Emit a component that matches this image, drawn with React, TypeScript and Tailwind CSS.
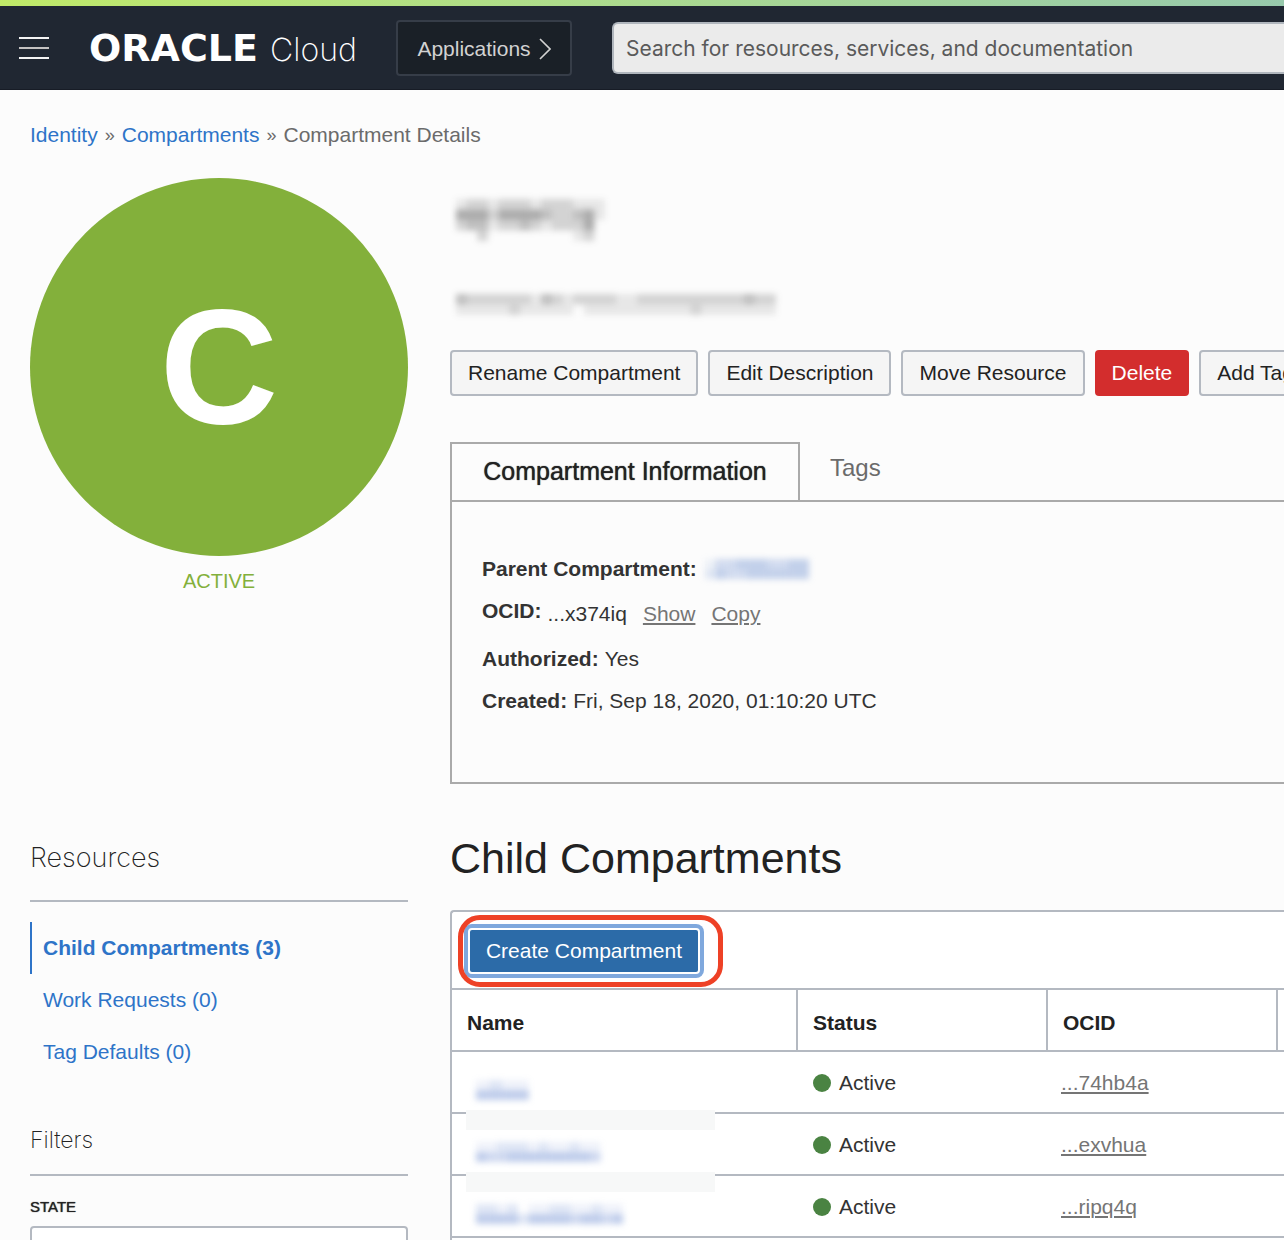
import React from "react";

type MosaicProps = {
  rows: string[];
  className: string;
};

// Pixelated stand-in for a private value: each digit is a cell's strength.
function Mosaic({ rows, className }: MosaicProps) {
  return (
    <svg
      aria-hidden="true"
      className={className}
      viewBox={`0 0 ${rows[0].length} ${rows.length}`}
      preserveAspectRatio="none"
      fill="currentColor"
    >
      {rows.map((row, y) =>
        row.split("").map((level, x) => (
          <rect key={`${x}-${y}`} x={x} y={y} width="1" height="1" fillOpacity={Number(level) / 10} />
        )),
      )}
    </svg>
  );
}

const actionClass =
  "h-[46px] shrink-0 whitespace-nowrap rounded border-2 border-[#b4b9c1] bg-[#f5f5f5] px-4 text-[21px] leading-[42px] text-[#222]";

const resources = [
  { label: "Child Compartments (3)", active: true },
  { label: "Work Requests (0)", active: false },
  { label: "Tag Defaults (0)", active: false },
];

const compartments = [
  { ocid: "...74hb4a", mosaic: ["12110", "44440"], width: "h-5 w-[66px]" },
  { ocid: "...exvhua", mosaic: ["1122212112110", "4334444444430"], width: "h-5 w-[135px]" },
  { ocid: "...ripq4q", mosaic: ["22120112211211", "44442444434434"], width: "h-5 w-[147px]" },
];

function Header() {
  return (
    <header>
      <div className="h-1.5 bg-gradient-to-r from-[#c0ea68] to-[#97c9ac]" />
      <div className="flex h-[84px] items-center overflow-hidden border-b border-[#171c26] bg-[#202732] pl-[19px]">
        <button type="button" aria-label="Menu" className="flex w-[30px] shrink-0 flex-col gap-2">
          <span className="h-0.5 bg-[#f4f4f4]" />
          <span className="h-0.5 bg-[#c4c2c2]" />
          <span className="h-0.5 bg-[#f4f4f4]" />
        </button>
        <a href="#home" className="ml-10 flex w-[307px] shrink-0 items-baseline gap-3 whitespace-nowrap pt-0.5 text-white">
          <span className="font-['DejaVu_Sans'] text-[38px] leading-[50px] font-bold">ORACLE</span>
          <span className="font-['Inter'] text-[32px] leading-[50px] font-extralight">Cloud</span>
        </a>
        <button
          type="button"
          className="flex h-14 w-44 shrink-0 items-center justify-center gap-2 rounded-sm border-2 border-[#363d48] bg-[#1a2027] pt-0.5 text-[21px] text-[#d2d2d2]"
        >
          Applications
          <svg aria-hidden="true" className="h-[22px] w-3" viewBox="0 0 12 22" fill="none" stroke="currentColor" strokeWidth="1.6">
            <path d="M1 1l10 10L1 21" />
          </svg>
        </button>
        <input
          type="text"
          aria-label="Search"
          placeholder="Search for resources, services, and documentation"
          className="ml-10 h-[52px] min-w-0 flex-1 rounded-l-md border-2 border-r-0 border-[#b0b6bd] bg-[#ebebeb] px-3 pt-0.5 font-['Inter'] text-[21px] text-[#555] placeholder:text-[#5a5a5a]"
        />
      </div>
    </header>
  );
}

function Info() {
  return (
    <section className="min-w-0 flex-1">
      <div className="flex h-[172px] flex-col items-start overflow-hidden pt-[21px]">
        <h1 aria-label="Compartment name" className="pl-1.5">
          <Mosaic
            className="h-[42px] w-[149px] text-[#333] blur-[3px]"
            rows={["12212221222111", "44424444322341", "23312232122240", "00200000000120"]}
          />
        </h1>
        <p aria-label="Compartment description" className="mt-[53px] pl-1.5">
          <Mosaic
            className="h-[21px] w-80 text-[#333] blur-[3px]"
            rows={["322222213212222112222222222322", "111112111110111111111121111111"]}
          />
        </p>
      </div>
      <div className="flex gap-2.5 overflow-hidden">
        <button type="button" className={actionClass}>Rename Compartment</button>
        <button type="button" className={actionClass}>Edit Description</button>
        <button type="button" className={actionClass}>Move Resource</button>
        <button type="button" className="h-[46px] shrink-0 rounded bg-[#d32d2d] px-[17px] text-[21px] text-white">
          Delete
        </button>
        <button type="button" className={actionClass}>Add Tags</button>
      </div>
      <div role="tablist" className="mt-[46px] flex border-b-2 border-[#aaa]">
        <button
          type="button"
          role="tab"
          aria-selected="true"
          className="h-[58px] w-[350px] whitespace-nowrap border-2 border-b-0 border-[#aaa] text-[25px] text-[#222] [text-shadow:0_0_1px_currentColor]"
        >
          Compartment Information
        </button>
        <button type="button" role="tab" aria-selected="false" className="h-[52px] px-[30px] text-2xl text-[#6b6b6b]">
          Tags
        </button>
      </div>
      <dl className="h-[282px] border-b-2 border-l-2 border-[#aaa] px-[30px] pt-[46px] text-[21px] leading-[42px] text-[#333]">
        <div className="flex items-center gap-2">
          <dt className="font-bold">Parent Compartment:</dt>
          <dd>
            <a href="#parent" aria-label="Parent compartment" className="block">
              <Mosaic className="h-5 w-[104px] text-[#6c8fd0] blur-[3px]" rows={["1334443344", "2433444444"]} />
            </a>
          </dd>
        </div>
        <div className="flex gap-1.5">
          <dt className="font-bold">OCID:</dt>
          <dd className="flex h-12 items-center">
            ...x374iq
            <a href="#show" className="ml-4 text-[#757575] underline decoration-2 underline-offset-2">Show</a>
            <a href="#copy" className="ml-4 text-[#757575] underline decoration-2 underline-offset-2">Copy</a>
          </dd>
        </div>
        <div className="flex gap-1.5">
          <dt className="font-bold">Authorized:</dt>
          <dd>Yes</dd>
        </div>
        <div className="flex gap-1.5">
          <dt className="font-bold">Created:</dt>
          <dd>Fri, Sep 18, 2020, 01:10:20 UTC</dd>
        </div>
      </dl>
    </section>
  );
}

function Sidebar() {
  return (
    <aside className="w-[378px] shrink-0">
      <h2 className="border-b-2 border-[#b4b9c1] pb-[18px] font-['Inter'] text-[27px] leading-[48px] font-extralight text-[#222]">
        Resources
      </h2>
      <nav className="mt-5 text-[21px] leading-[52px] text-[#2e74c8]">
        {resources.map((item) => (
          <a
            key={item.label}
            href="#list"
            className={
              item.active
                ? "block border-l-2 border-[#2e74c8] pl-[11px] font-bold"
                : "block border-l-2 border-transparent pl-[11px]"
            }
          >
            {item.label}
          </a>
        ))}
      </nav>
      <h2 className="mt-[42px] border-b-2 border-[#b4b9c1] pb-[14px] font-['Inter'] text-[23px] leading-10 font-extralight text-[#222]">
        Filters
      </h2>
      <label htmlFor="state" className="mt-5 mb-2 block text-[15px] leading-[22px] text-[#222] [text-shadow:0_0_1px_currentColor]">
        STATE
      </label>
      <select id="state" className="h-[46px] w-full appearance-none rounded border-2 border-[#b4b9c1] bg-white px-3" />
    </aside>
  );
}

function Children() {
  return (
    <section className="min-w-0 flex-1">
      <h2 className="text-[43px] leading-[48px] text-[#222]">Child Compartments</h2>
      <div className="mt-7 overflow-hidden rounded-tl border-t-2 border-l-2 border-[#b4b9c1] bg-white pb-12">
        <div className="relative h-[78px] border-b-2 border-[#b4b9c1] px-4 pt-4">
          <button
            type="button"
            className="h-[46px] w-[232px] whitespace-nowrap rounded border-2 border-white bg-[#2c6ba8] text-[21px] text-white ring-4 ring-[#7fa8dd]"
          >
            Create Compartment
          </button>
          <div className="pointer-events-none absolute top-[3px] left-1.5 h-[72px] w-[265px] rounded-[22px] border-5 border-[#ee4126]" />
        </div>
        <table className="w-full table-fixed border-separate border-spacing-0 text-left text-[21px]">
          <colgroup>
            <col className="w-[346px]" />
            <col className="w-[250px]" />
            <col className="w-[230px]" />
            <col />
          </colgroup>
          <thead>
            <tr className="h-[62px] text-[#222]">
              <th className="border-r-2 border-b-2 border-[#b4b9c1] px-[15px] pt-1.5 font-bold">Name</th>
              <th className="border-r-2 border-b-2 border-[#b4b9c1] px-[15px] pt-1.5 font-bold">Status</th>
              <th className="border-r-2 border-b-2 border-[#b4b9c1] px-[15px] pt-1.5 font-bold">OCID</th>
              <th className="border-b-2 border-[#b4b9c1]" />
            </tr>
          </thead>
          <tbody className="text-[#333]">
            {compartments.map((row, index) => (
              <tr key={row.ocid} className="h-[62px]">
                <td className="relative border-b-2 border-[#b4b9c1] px-6 pt-4 align-middle">
                  <a href="#compartment" aria-label="Compartment" className="block">
                    <Mosaic className={`${row.width} text-[#5f82cc] blur-[3px]`} rows={row.mosaic} />
                  </a>
                  {index < 2 && <div className="absolute -bottom-[18px] left-[14px] z-10 h-5 w-[249px] bg-[#f7f8f8]" />}
                </td>
                <td className="border-b-2 border-[#b4b9c1] px-[15px] pt-0.5">
                  <span className="flex items-center gap-2">
                    <span className="size-[18px] rounded-full bg-[#4a8342]" />
                    Active
                  </span>
                </td>
                <td className="border-b-2 border-[#b4b9c1] px-[13px] pt-0.5">
                  <a href="#ocid" className="text-[#757575] underline decoration-2 underline-offset-2">{row.ocid}</a>
                </td>
                <td className="border-b-2 border-[#b4b9c1]" />
              </tr>
            ))}
          </tbody>
        </table>
      </div>
    </section>
  );
}

export default function App() {
  return (
    <div className="min-h-screen overflow-hidden bg-[#fcfcfc] font-['Liberation_Sans',Arial,sans-serif]">
      <Header />
      <main className="pl-[30px]">
        <nav aria-label="Breadcrumb" className="flex gap-[7px] pt-[30px] text-[21px] leading-[30px] text-[#6b6b6b]">
          <a href="#identity" className="text-[#2e74c8]">Identity</a>
          <span className="text-lg leading-[30px]">»</span>
          <a href="#compartments" className="text-[#2e74c8]">Compartments</a>
          <span className="text-lg leading-[30px]">»</span>
          <span>Compartment Details</span>
        </nav>
        <div className="mt-7 flex gap-[42px]">
          <div className="w-[378px] shrink-0 text-center">
            <div className="flex aspect-square items-center justify-center rounded-full bg-[#83b03b] text-[164px] leading-none font-bold text-white">
              C
            </div>
            <p className="mt-2.5 text-xl leading-[30px] text-[#83b03b]">ACTIVE</p>
          </div>
          <Info />
        </div>
        <div className="mt-[50px] flex gap-[42px]">
          <Sidebar />
          <Children />
        </div>
      </main>
    </div>
  );
}
